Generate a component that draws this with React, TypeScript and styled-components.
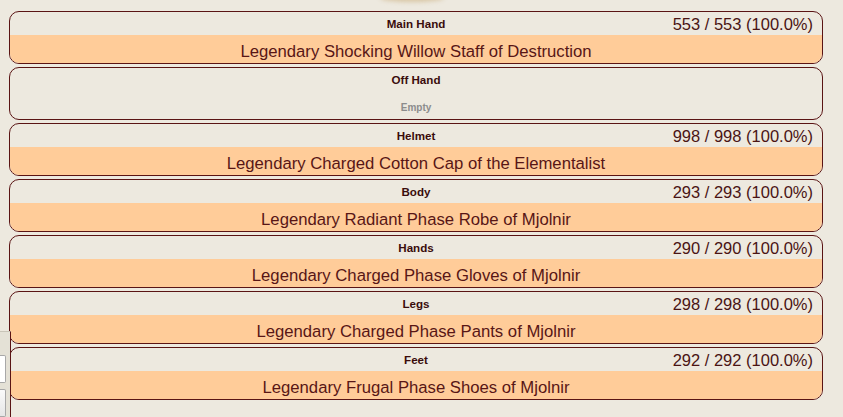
import React from "react";
import styled, { createGlobalStyle } from "styled-components";

const Global = createGlobalStyle`
  html, body { margin: 0; padding: 0; background: #ede9df; }
  body { font-family: Arial, "Liberation Sans", sans-serif; overflow: hidden; }
`;

const Page = styled.div`
  position: relative;
  width: 843px;
  height: 417px;
  overflow: hidden;
  background: #ede9df;
`;

const TopBlur = styled.div`
  position: absolute;
  left: 380px;
  top: -6px;
  width: 64px;
  height: 8px;
  border-radius: 50%;
  background: #d9c7a6;
  filter: blur(2px);
`;

const List = styled.div`
  display: flex;
  flex-direction: column;
  gap: 3px;
  padding: 11px 20px 0 9px;
`;

const Card = styled.div`
  border: 1px solid #5a1414;
  border-radius: 10px;
  overflow: hidden;
  background: #ede9df;
  height: 51px;
  display: flex;
  flex-direction: column;
`;

const Header = styled.div`
  height: 23px;
  display: grid;
  grid-template-columns: 1fr auto 1fr;
  align-items: center;
  padding: 0 9px;
`;

const Slot = styled.span`
  grid-column: 2;
  font-size: 11.6px;
  font-weight: bold;
  color: #3a0c0c;
`;

const Stats = styled.span`
  grid-column: 3;
  justify-self: end;
  font-size: 16.5px;
  color: #4a1414;
  padding-top: 1px;
  white-space: nowrap;
`;

const Item = styled.div`
  flex: 1;
  background: #ffcc99;
  display: flex;
  align-items: center;
  justify-content: center;
  font-size: 16.7px;
  color: #581616;
  padding-top: 5px;
`;

const Empty = styled.div`
  flex: 1;
  display: flex;
  align-items: center;
  justify-content: center;
  font-size: 10px;
  font-weight: bold;
  color: #8c8c8c;
  padding-top: 5px;
`;

const SidePanel = styled.div`
  position: absolute;
  left: -4px;
  top: 331px;
  width: 15px;
  height: 100px;
  background: #e4e1d6;
  border-right: 1px solid #5a1414;
  border-top: 1px solid #c8c4b8;
  display: flex;
  flex-direction: column;
  gap: 6px;
  padding-top: 23px;
  box-sizing: border-box;
`;

const SideBox = styled.div<{ $grad?: boolean }>`
  width: 9px;
  height: 26px;
  flex: none;
  background: ${(p) => (p.$grad ? "linear-gradient(#fafafa, #e6e6e6)" : "#ffffff")};
  border: 1px solid #a8a8a8;
  border-left: none;
  border-radius: 0 2px 2px 0;
`;

type Row = { slot: string; stats?: string; item?: string };

const rows: Row[] = [
  { slot: "Main Hand", stats: "553 / 553 (100.0%)", item: "Legendary Shocking Willow Staff of Destruction" },
  { slot: "Off Hand" },
  { slot: "Helmet", stats: "998 / 998 (100.0%)", item: "Legendary Charged Cotton Cap of the Elementalist" },
  { slot: "Body", stats: "293 / 293 (100.0%)", item: "Legendary Radiant Phase Robe of Mjolnir" },
  { slot: "Hands", stats: "290 / 290 (100.0%)", item: "Legendary Charged Phase Gloves of Mjolnir" },
  { slot: "Legs", stats: "298 / 298 (100.0%)", item: "Legendary Charged Phase Pants of Mjolnir" },
  { slot: "Feet", stats: "292 / 292 (100.0%)", item: "Legendary Frugal Phase Shoes of Mjolnir" },
];

export default function App() {
  return (
    <Page>
      <Global />
      <TopBlur />
      <List>
        {rows.map((r) => (
          <Card key={r.slot}>
            <Header>
              <Slot>{r.slot}</Slot>
              {r.stats && <Stats>{r.stats}</Stats>}
            </Header>
            {r.item ? <Item>{r.item}</Item> : <Empty>Empty</Empty>}
          </Card>
        ))}
      </List>
      <SidePanel>
        <SideBox />
        <SideBox $grad />
      </SidePanel>
    </Page>
  );
}
